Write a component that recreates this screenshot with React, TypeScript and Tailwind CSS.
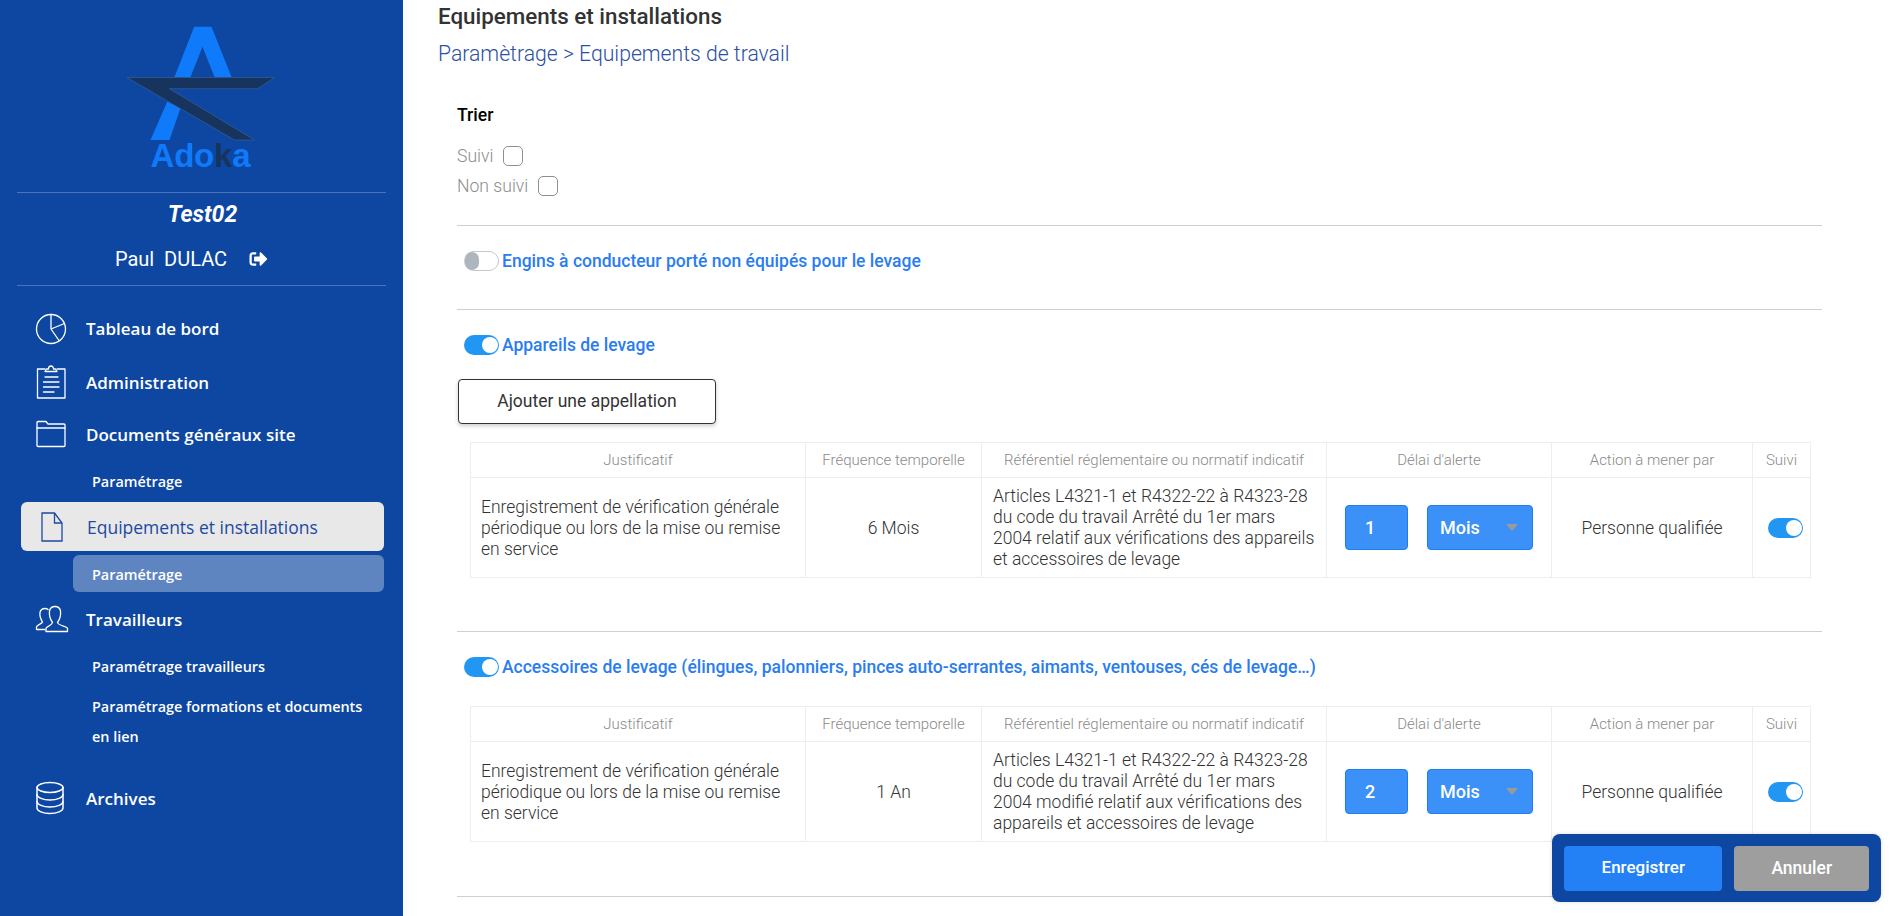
import React from "react";
import { FaSignOutAlt } from "react-icons/fa";

const roboto = "font-['Roboto',sans-serif]";

function Logo() {
  return (
    <div className="relative h-[150px] w-[150px]">
      <svg width="150" height="122" viewBox="0 0 150 122" className="absolute left-0 top-0">
        <path d="M68.200 0.700H85.500L105.500 51H88.500L76.500 20.700L64.500 51H48.500Z" fill="#0f7bfb" />
        <path d="M41.200 75.700L24.500 114H43.500L54.500 82Z" fill="#0f7bfb" />
        <path d="M1 51.500H148.800L131.500 62.700H43.500L128.500 114H108.500Z" fill="#17345f" stroke="#3a5f93" strokeWidth="0.7" />
      </svg>
      <div className="absolute left-[25px] top-[111px] text-[33px] leading-[38px] font-bold text-[#0f7bfb] font-['Liberation_Sans',sans-serif] tracking-[-0.2px]">
        Ado<span className="text-[#17345f]">k</span>a
      </div>
    </div>
  );
}

const iconProps = {
  fill: "none",
  stroke: "white",
  strokeWidth: 1.3,
  strokeLinecap: "round" as const,
  strokeLinejoin: "round" as const,
};

function PieIcon() {
  return (
    <svg width="32" height="32" viewBox="0 0 32 32" {...iconProps}>
      <circle cx="16" cy="16" r="14.500" />
      <path d="M16 1.500V16L24 27.500M16 16L29.500 10.500" />
    </svg>
  );
}

function ClipboardIcon() {
  return (
    <svg width="32" height="36" viewBox="0 0 32 36" {...iconProps}>
      <path d="M10 5H2.500V34H30V5H22" />
      <path d="M10 7.500H22L20.500 5H18.500C18.500 1 13.500 1 13.500 5H11.500Z" />
      <path d="M10 13H23M8.500 18H24M8.500 23H24M8.500 28H19" />
    </svg>
  );
}

function FolderIcon() {
  return (
    <svg width="32" height="28" viewBox="0 0 32 28" {...iconProps}>
      <path d="M3 26.500H29C29.800 26.500 30 26 30 25.500V5C30 4.500 29.800 4 29 4H13L11 1.500H3C2.200 1.500 2 2 2 2.500V25.500C2 26 2.200 26.500 3 26.500Z" />
      <path d="M2 8H30" />
    </svg>
  );
}

function FileIcon() {
  return (
    <svg width="24" height="32" viewBox="0 0 24 32" fill="none" stroke="#1d4aa0" strokeWidth="1.300">
      <path d="M2 2H14.500L22 12V30H2Z" />
      <path d="M14.500 2V12H22" />
    </svg>
  );
}

function UsersIcon() {
  return (
    <svg width="34" height="28" viewBox="0 0 34 28" {...iconProps}>
      <path d="M10 24.500H1.500V22C1.500 20 7 19 7.500 17C5 13 4.500 11 5 7.500C5.500 5 7.500 3.500 10 3.500C11.500 3.500 12.500 4 13 4.500" />
      <path d="M11 26.500V23.500C11 21.500 17 20.500 17.500 17.500C15 14 14 10 14.500 6C15 3.500 17 1.500 20 1.500C23 1.500 25 3.500 25.500 6C26 10 25 14 22.500 17.500C23 20.500 32.500 21.500 32.500 23.500V26.500Z" />
    </svg>
  );
}

function DatabaseIcon() {
  return (
    <svg width="30" height="34" viewBox="0 0 30 34" {...iconProps} strokeWidth={1.500}>
      <ellipse cx="15" cy="6.500" rx="13" ry="5" />
      <path d="M2 6.500V27C2 30 8 32.500 15 32.500C22 32.500 28 30 28 27V6.500" />
      <path d="M2 13.500C2 16.500 8 19 15 19C22 19 28 16.500 28 13.500" />
      <path d="M2 20.500C2 23.500 8 26 15 26C22 26 28 23.500 28 20.500" />
    </svg>
  );
}

function NavItem({ icon, label, className }: { icon: React.ReactNode; label: string; className: string }) {
  return (
    <div className={`flex items-center pl-[35px] ${className}`}>
      <span className="flex w-[51px] shrink-0 justify-start">{icon}</span>
      <span className="pt-[1px] text-[17px] font-semibold text-white">{label}</span>
    </div>
  );
}

function SubItem({ label, className }: { label: string; className: string }) {
  return <div className={`flex items-center pl-[92px] pt-[2px] text-[14.4px] font-semibold text-white ${className}`}>{label}</div>;
}

function Sidebar() {
  return (
    <aside className="h-[916px] w-[403px] shrink-0 bg-[#0d47a1] font-['Open_Sans',sans-serif]">
      <div className="mx-[17px] flex h-[193px] justify-center border-b border-[#4a74b6] pt-[26px]">
        <div className="ml-[-2px]">
          <Logo />
        </div>
      </div>
      <div className={`mx-[17px] h-[93px] border-b border-[#4a74b6] ${roboto}`}>
        <div className="pl-[2px] pt-[7px] text-center text-[23px] leading-[30px] font-bold italic text-white">Test02</div>
        <div className="mt-[17px] flex items-center justify-center pr-[20px] text-[20px] leading-[24px] text-white">
          <span className="whitespace-pre">Paul  DULAC</span>
          <FaSignOutAlt className="ml-[22px] h-[18px] w-[19px]" />
        </div>
      </div>
      <nav className="pt-[16px]">
        <NavItem icon={<PieIcon />} label="Tableau de bord" className="h-[53px]" />
        <NavItem icon={<ClipboardIcon />} label="Administration" className="h-[54px]" />
        <NavItem icon={<FolderIcon />} label="Documents généraux site" className="h-[50px]" />
        <SubItem label="Paramétrage" className="h-[43px]" />
        <div className="mx-[21px] flex h-[49px] w-[363px] items-center rounded-[6px] bg-[#e8e8e8] pl-[19px]">
          <span className="flex w-[47px] shrink-0">
            <FileIcon />
          </span>
          <span className="pt-[2px] text-[17.5px] text-[#1d4aa0]">Equipements et installations</span>
        </div>
        <div className="ml-[73px] mt-[4px] flex h-[37px] w-[311px] items-center rounded-[6px] bg-[#5f85c1] pl-[19px] pt-[2px] text-[14.4px] font-semibold text-white">
          Paramétrage
        </div>
        <NavItem icon={<UsersIcon />} label="Travailleurs" className="h-[54px]" />
        <SubItem label="Paramétrage travailleurs" className="h-[40px]" />
        <div className="mt-[6px] pl-[92px] pr-[35px] text-[14.4px] leading-[30px] font-semibold text-white">
          Paramétrage formations et documents en lien
        </div>
        <NavItem icon={<DatabaseIcon />} label="Archives" className="mt-[18px] h-[56px]" />
      </nav>
    </aside>
  );
}

function Toggle({ on }: { on: boolean }) {
  if (on) {
    return (
      <span className="flex h-[20px] w-[35px] shrink-0 items-center justify-end rounded-full bg-[#2196f3] pr-[1px]">
        <span className="h-[16px] w-[16px] rounded-full bg-white" />
      </span>
    );
  }
  return (
    <span className="flex h-[20px] w-[35px] shrink-0 items-center rounded-full border border-[#c4c8cc] bg-white">
      <span className="h-[18px] w-[14px] rounded-full bg-[#adb5bd]" />
    </span>
  );
}

function SectionTitle({ on, label }: { on: boolean; label: string }) {
  return (
    <div className="flex h-[20px] items-center pl-[7px]">
      <Toggle on={on} />
      <span className="ml-[3px] whitespace-nowrap text-[17.5px] font-medium text-[#2a7df0]">{label}</span>
    </div>
  );
}

type RowData = {
  freq: string;
  ref: string;
  delay: string;
};

function AlertTable({ row }: { row: RowData }) {
  const headCell = "h-[35px] border border-[#eeeeee] text-center text-[15px] font-light text-[#8a8a8a]";
  const bodyCell = "h-[100px] border border-[#eeeeee] text-[17.5px] leading-[21px] font-light text-[#333333]";
  return (
    <table className="ml-[13px] w-[1340px] table-fixed border-collapse">
      <thead>
        <tr>
          <th className={`w-[335px] ${headCell}`}>Justificatif</th>
          <th className={`w-[176px] ${headCell}`}>Fréquence temporelle</th>
          <th className={`w-[345px] ${headCell}`}>Référentiel réglementaire ou normatif indicatif</th>
          <th className={`w-[225px] ${headCell}`}>Délai d'alerte</th>
          <th className={`w-[201px] ${headCell}`}>Action à mener par</th>
          <th className={`w-[58px] ${headCell}`}>Suivi</th>
        </tr>
      </thead>
      <tbody>
        <tr>
          <td className={`px-[10px] pt-[1px] ${bodyCell}`}>Enregistrement de vérification générale périodique ou lors de la mise ou remise en service</td>
          <td className={`pt-[1px] text-center ${bodyCell}`}>{row.freq}</td>
          <td className={`px-[11px] pt-[1px] ${bodyCell}`}>{row.ref}</td>
          <td className={bodyCell}>
            <div className="flex items-center pl-[18px]">
              <input
                readOnly
                value={row.delay}
                className="h-[45px] w-[63px] rounded-[4px] border border-[#1e7ef0] bg-[#3b91f7] pl-[19px] text-[18px] font-medium text-white outline-none"
              />
              <div className="ml-[19px] flex h-[45px] w-[106px] items-center justify-between rounded-[4px] border border-[#1e7ef0] bg-[#3b91f7] pl-[12px] pr-[14px] text-[18px] font-medium text-white">
                Mois
                <span className="h-0 w-0 border-x-[6px] border-t-[7px] border-x-transparent border-t-[#9a9a9a]" />
              </div>
            </div>
          </td>
          <td className={`pt-[1px] text-center ${bodyCell}`}>Personne qualifiée</td>
          <td className={bodyCell}>
            <div className="flex justify-center pl-[8px]">
              <Toggle on />
            </div>
          </td>
        </tr>
      </tbody>
    </table>
  );
}

function CheckRow({ label }: { label: string }) {
  return (
    <div className="flex h-[30px] items-center text-[17.6px] font-light text-[#8d8d8d]">
      {label}
      <span className="ml-[10px] h-[20px] w-[20px] rounded-[5px] border border-[#8f8f8f] bg-white" />
    </div>
  );
}

export default function App() {
  return (
    <div className={`relative flex h-[916px] w-[1890px] overflow-hidden bg-white ${roboto}`}>
      <Sidebar />
      <main className="min-w-0 flex-1 pl-[35px]">
        <h1 className="h-[32px] text-[22.4px] leading-[32px] font-medium text-[#333333]">Equipements et installations</h1>
        <p className="mt-[8px] h-[28px] text-[21.2px] leading-[28px] font-light text-[#2c4fa3]">Paramètrage &gt; Equipements de travail</p>
        <div className="ml-[19px] w-[1365px]">
          <div className="h-[158px] border-b border-[#cfcfcf] pt-[35px]">
            <div className="h-[24px] text-[17.6px] leading-[24px] font-medium text-black">Trier</div>
            <div className="mt-[14px]">
              <CheckRow label="Suivi" />
              <CheckRow label="Non suivi" />
            </div>
          </div>
          <section className="h-[84px] border-b border-[#cfcfcf] pt-[25px]">
            <SectionTitle on={false} label="Engins à conducteur porté non équipés pour le levage" />
          </section>
          <section className="h-[322px] border-b border-[#cfcfcf] pt-[25px]">
            <SectionTitle on label="Appareils de levage" />
            <button className="ml-[1px] mt-[24px] h-[45px] w-[258px] rounded-[4px] border border-[#333333] bg-white text-[17.5px] text-[#333333] shadow-[0_2px_4px_rgba(0,0,0,0.2)]">
              Ajouter une appellation
            </button>
            <div className="mt-[18px]">
              <AlertTable
                row={{
                  freq: "6 Mois",
                  ref: "Articles L4321-1 et R4322-22 à R4323-28 du code du travail Arrêté du 1er mars 2004 relatif aux vérifications des appareils et accessoires de levage",
                  delay: "1",
                }}
              />
            </div>
          </section>
          <section className="h-[265px] border-b border-[#cfcfcf] pt-[25px]">
            <SectionTitle on label="Accessoires de levage (élingues, palonniers, pinces auto-serrantes, aimants, ventouses, cés de levage…)" />
            <div className="mt-[29px]">
              <AlertTable
                row={{
                  freq: "1 An",
                  ref: "Articles L4321-1 et R4322-22 à R4323-28 du code du travail Arrêté du 1er mars 2004 modifié relatif aux vérifications des appareils et accessoires de levage",
                  delay: "2",
                }}
              />
            </div>
          </section>
        </div>
      </main>
      <div className="absolute left-[1552px] top-[834px] flex h-[68px] w-[329px] items-center gap-[12px] rounded-[8px] bg-[#0d47a1] px-[12px] shadow-[0_0_4px_rgba(0,0,0,0.15)]">
        <button className="h-[45px] w-[159px] rounded-[4px] bg-[#2481f5] text-[17px] font-medium text-white">Enregistrer</button>
        <button className="h-[45px] w-[135px] rounded-[4px] bg-[#9e9e9e] text-[17.5px] font-medium text-white">Annuler</button>
      </div>
    </div>
  );
}
